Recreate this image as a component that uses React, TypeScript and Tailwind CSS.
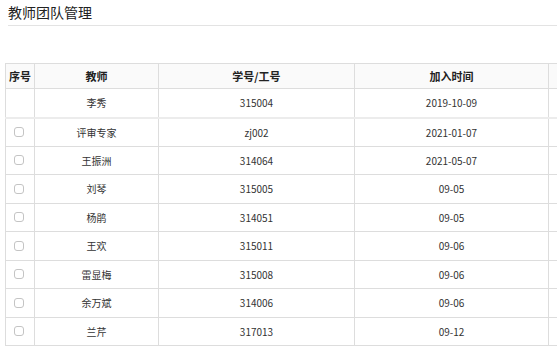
import React from "react";

const rows = [
    { name: "李秀", no: "315004", date: "2019-10-09", check: false },
    { name: "评审专家", no: "zj002", date: "2021-01-07", check: true },
    { name: "王振洲", no: "314064", date: "2021-05-07", check: true },
    { name: "刘琴", no: "315005", date: "09-05", check: true },
    { name: "杨鹃", no: "314051", date: "09-05", check: true },
    { name: "王欢", no: "315011", date: "09-06", check: true },
    { name: "雷显梅", no: "315008", date: "09-06", check: true },
    { name: "余万斌", no: "314006", date: "09-06", check: true },
    { name: "兰芹", no: "317013", date: "09-12", check: true },
];

export default function App() {
    return (
        <div
            className="w-[557px] h-[351px] overflow-hidden bg-white text-[#333]"
            style={{ fontFamily: '"Noto Sans CJK SC", "Liberation Sans", sans-serif' }}
        >
            <div className="pl-2 pt-[2px]">
                <h1 className="text-[14px] leading-[20px] font-normal text-[#222]">教师团队管理</h1>
                <div className="mt-[3px] h-px bg-[#e3e3e3]" />
            </div>

            <div className="pl-[5px] pt-[37px]">
                <table className="border-collapse table-fixed w-[620px] text-[10px]">
                    <colgroup>
                        <col className="w-[29px]" />
                        <col className="w-[124px]" />
                        <col className="w-[196px]" />
                        <col className="w-[194px]" />
                        <col className="w-[77px]" />
                    </colgroup>
                    <thead>
                        <tr className="h-[25px] bg-[#fafafa] text-[11px] text-[#222]">
                            <th className="border border-[#ddd] font-bold text-left pl-[3px]">序号</th>
                            <th className="border border-[#ddd] font-bold">教师</th>
                            <th className="border border-[#ddd] font-bold">学号/工号</th>
                            <th className="border border-[#ddd] font-bold">加入时间</th>
                            <th className="border border-[#ddd] font-bold"></th>
                        </tr>
                    </thead>
                    <tbody>
                        {rows.map((r, i) => (
                            <tr
                                key={i}
                                className={i === 0 ? "h-[29px] border-b-2 border-[#ececec]" : "h-[28.5px]"}
                            >
                                <td className="border-x border-b border-[#ddd] pl-[8px]">
                                    {r.check && (
                                        <span className="block w-[10px] h-[10px] rounded-[3px] border border-[#c4c4c4] bg-white" />
                                    )}
                                </td>
                                <td className="border-x border-b border-[#ddd] text-center">{r.name}</td>
                                <td className="border-x border-b border-[#ddd] text-center">{r.no}</td>
                                <td className="border-x border-b border-[#ddd] text-center">{r.date}</td>
                                <td className="border-x border-b border-[#ddd]"></td>
                            </tr>
                        ))}
                    </tbody>
                </table>
            </div>
        </div>
    );
}
